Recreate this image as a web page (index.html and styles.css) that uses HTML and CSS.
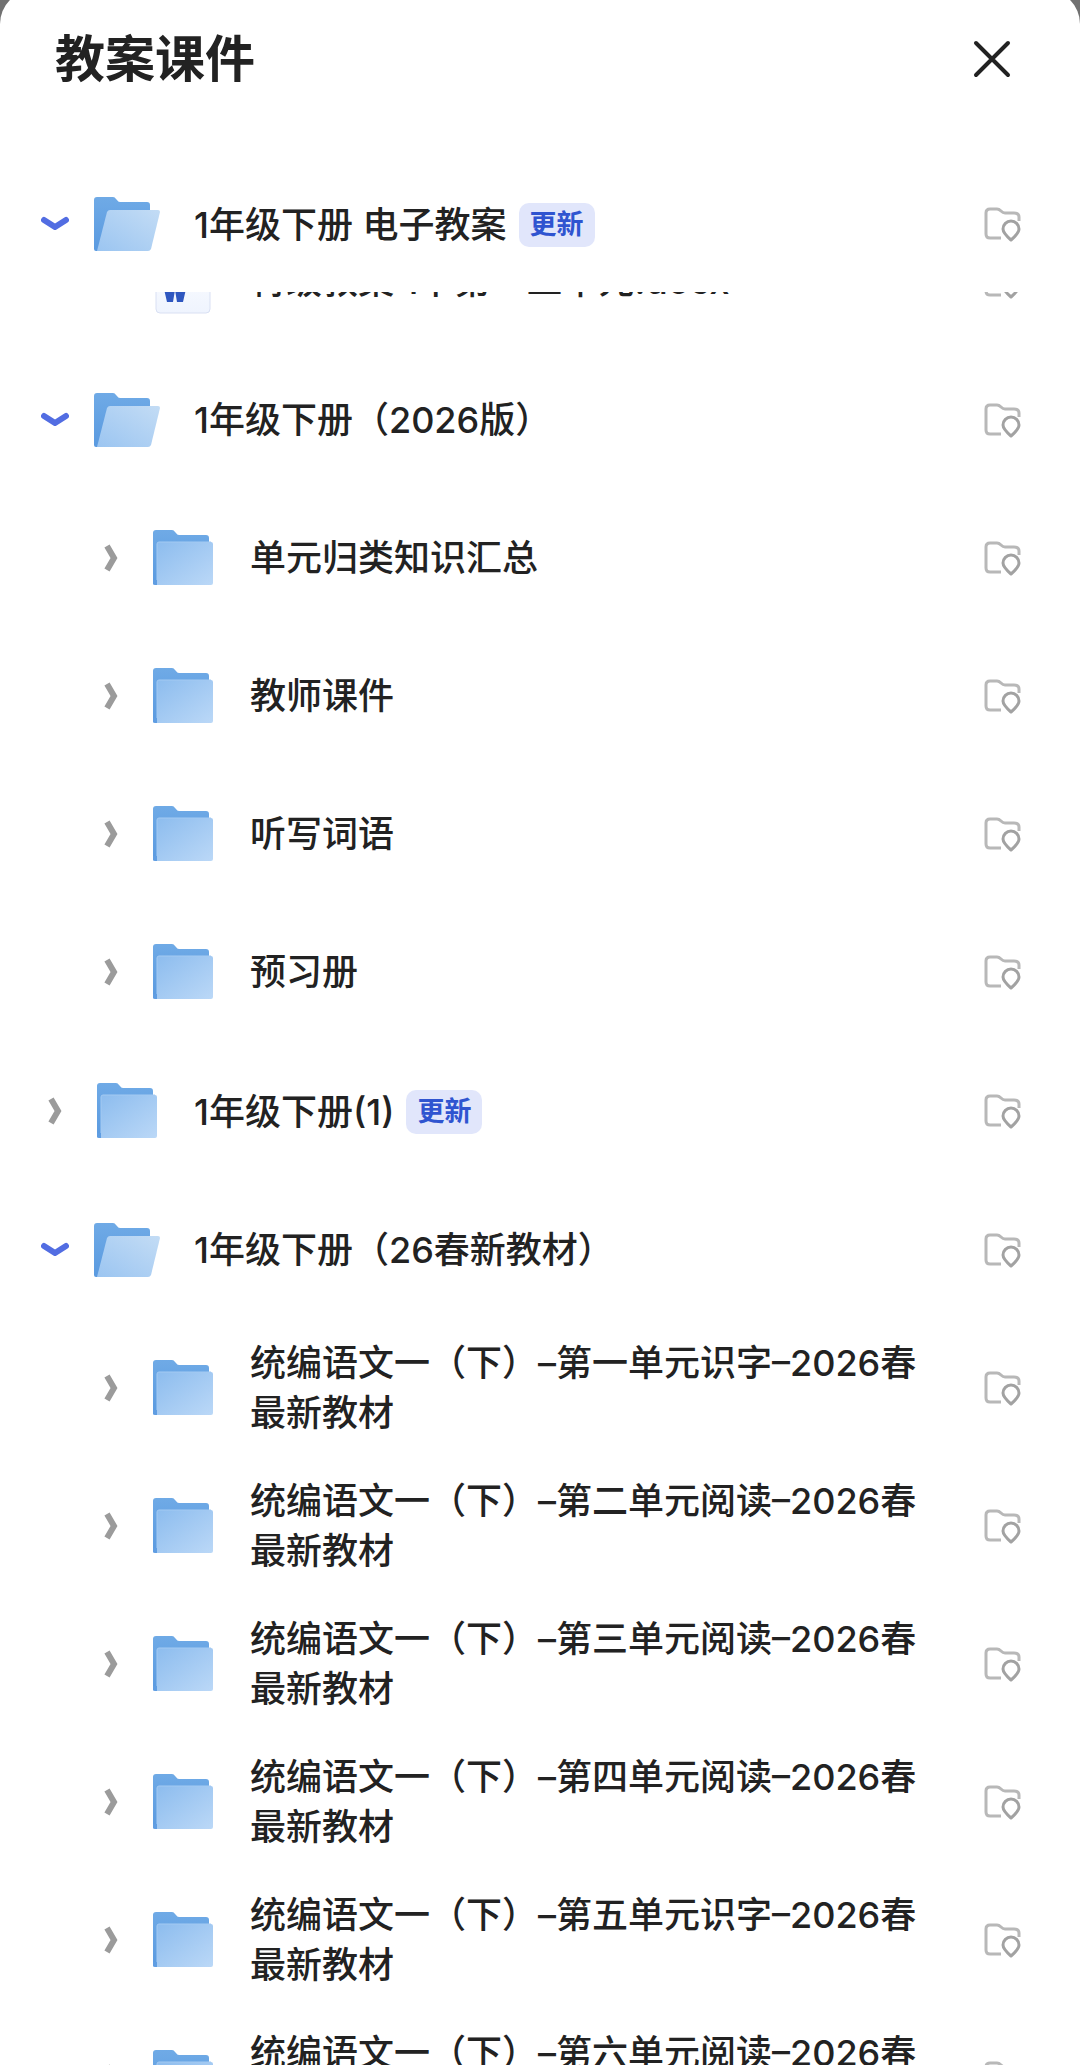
FILE: index.html
```html
<!DOCTYPE html>
<html lang="zh-CN">
<head>
    <meta charset="UTF-8">
    <meta name="viewport" content="width=device-width, initial-scale=1.0">
    <title>教案课件</title>
    <link rel="stylesheet" href="styles.css">
</head>
<body>
    <!-- Icon definitions -->
    <svg class="icon-defs" aria-hidden="true" xmlns="http://www.w3.org/2000/svg">
        <defs>
            <linearGradient id="back" x1="0" y1="0" x2="0" y2="1">
                <stop offset="0" stop-color="#6faae6"/>
                <stop offset="1" stop-color="#5a9ae0"/>
            </linearGradient>
            <linearGradient id="front" x1="0" y1="0" x2="1" y2="1">
                <stop offset="0" stop-color="#8cbcee"/>
                <stop offset="1" stop-color="#bbd8f7"/>
            </linearGradient>
            <linearGradient id="flap" x1="0" y1="1" x2="1" y2="0">
                <stop offset="0" stop-color="#9bc5f1"/>
                <stop offset="1" stop-color="#c3dcf5"/>
            </linearGradient>
            <linearGradient id="paper" x1="0" y1="0" x2="0" y2="1">
                <stop offset="0" stop-color="#ffffff"/>
                <stop offset="1" stop-color="#eff4fe"/>
            </linearGradient>
        </defs>
        <symbol id="folder" viewBox="0 0 66 56">
            <path d="M3 54V3q0-3 3-3h16q2 0 3 2l1 1q1 2 3 2h27q3 0 3 3v45z" fill="url(#back)"/>
            <path d="M7 14q0-2 2-2h52q2 0 2 2v39q0 2-2 2H5q2 0 2-2z" fill="url(#front)"/>
            <path d="M7 53V14q0-2 2-2h52" fill="none" stroke="#a4caf2"/>
            <path d="M3 54V50h4v5H5q-2 0-2-1z" fill="#5f9de2"/>
        </symbol>
        <symbol id="folder-open" viewBox="0 0 66 56">
            <path d="M0 53V4q0-3 3-3h16q2 0 3 2l1 1q1 2 3 2h27q3 0 3 3v20L5 55H2q-2 0-2-2z" fill="url(#back)"/>
            <path d="M13 16q1-2 3-2h48q2 0 2 2l-9 37q-1 2-3 2H3z" fill="url(#flap)"/>
        </symbol>
        <symbol id="down" viewBox="0 0 28 28">
            <path d="M3 10l11 7 11-7" fill="none" stroke="#526de2" stroke-width="6" stroke-linecap="round" stroke-linejoin="round"/>
        </symbol>
        <symbol id="right" viewBox="0 0 28 28">
            <path d="M10 2l7 12-7 12" fill="none" stroke="#9b9b9b" stroke-width="6"/>
        </symbol>
        <symbol id="locate" viewBox="0 0 38 36">
            <path d="M18 32H7q-4 0-4-4V7q0-4 4-4h7q2 0 4 2t4 2h9q5 0 5 4v4" fill="none" stroke="#b8b8b8" stroke-width="3"/>
            <path d="M28 34q-8-7-8-11a8 8 0 0 1 16 0q0 4-8 11z" fill="none" stroke="#a2a2a2" stroke-width="3" stroke-linejoin="round"/>
        </symbol>
        <symbol id="close" viewBox="0 0 38 38">
            <path d="M3 3l32 32M35 3L3 35" fill="none" stroke="#222222" stroke-width="4" stroke-linecap="round"/>
        </symbol>
        <symbol id="doc" viewBox="0 0 66 66">
            <rect x="6" y="1" width="54" height="64" rx="4" fill="url(#paper)" stroke="#d9e0f3"/>
            <path d="M11 28h6l4 14 2-14h4l2 14 4-14h6l-6 26h-6l-2-12-2 12h-6z" fill="#2f57c0"/>
        </symbol>
    </svg>

    <main class="sheet">
        <header class="sheet-header">
            <h1>教案课件</h1>
            <button class="icon-button" type="button" aria-label="关闭"><svg class="close"><use href="#close"/></svg></button>
        </header>

        <div class="row pinned">
            <button class="toggle" type="button" aria-expanded="true" aria-label="收起"><svg class="arrow"><use href="#down"/></svg></button>
            <svg class="folder"><use href="#folder-open"/></svg>
            <div class="name tagged">1年级下册 电子教案<span class="badge">更新</span></div>
            <button class="icon-button" type="button" aria-label="定位"><svg class="locate"><use href="#locate"/></svg></button>
        </div>

        <!-- Last file of the first folder, scrolled under the pinned row -->
        <div class="scrolled">
            <div class="row child">
                <span class="toggle"></span>
                <svg class="doc"><use href="#doc"/></svg>
                <div class="name">特级教案 1下第一二单元.docx</div>
                <button class="icon-button" type="button" aria-label="定位"><svg class="locate"><use href="#locate"/></svg></button>
            </div>
        </div>

        <ul class="tree">
            <li>
                <div class="row">
                    <button class="toggle" type="button" aria-expanded="true" aria-label="收起"><svg class="arrow"><use href="#down"/></svg></button>
                    <svg class="folder"><use href="#folder-open"/></svg>
                    <div class="name">1年级下册（2026版）</div>
                    <button class="icon-button" type="button" aria-label="定位"><svg class="locate"><use href="#locate"/></svg></button>
                </div>
                <ul>
                    <li class="row child">
                        <button class="toggle" type="button" aria-expanded="false" aria-label="展开"><svg class="arrow"><use href="#right"/></svg></button>
                        <svg class="folder"><use href="#folder"/></svg>
                        <div class="name">单元归类知识汇总</div>
                        <button class="icon-button" type="button" aria-label="定位"><svg class="locate"><use href="#locate"/></svg></button>
                    </li>
                    <li class="row child">
                        <button class="toggle" type="button" aria-expanded="false" aria-label="展开"><svg class="arrow"><use href="#right"/></svg></button>
                        <svg class="folder"><use href="#folder"/></svg>
                        <div class="name">教师课件</div>
                        <button class="icon-button" type="button" aria-label="定位"><svg class="locate"><use href="#locate"/></svg></button>
                    </li>
                    <li class="row child">
                        <button class="toggle" type="button" aria-expanded="false" aria-label="展开"><svg class="arrow"><use href="#right"/></svg></button>
                        <svg class="folder"><use href="#folder"/></svg>
                        <div class="name">听写词语</div>
                        <button class="icon-button" type="button" aria-label="定位"><svg class="locate"><use href="#locate"/></svg></button>
                    </li>
                    <li class="row child">
                        <button class="toggle" type="button" aria-expanded="false" aria-label="展开"><svg class="arrow"><use href="#right"/></svg></button>
                        <svg class="folder"><use href="#folder"/></svg>
                        <div class="name">预习册</div>
                        <button class="icon-button" type="button" aria-label="定位"><svg class="locate"><use href="#locate"/></svg></button>
                    </li>
                </ul>
            </li>
            <li>
                <div class="row">
                    <button class="toggle" type="button" aria-expanded="false" aria-label="展开"><svg class="arrow"><use href="#right"/></svg></button>
                    <svg class="folder"><use href="#folder"/></svg>
                    <div class="name tagged">1年级下册(1)<span class="badge">更新</span></div>
                    <button class="icon-button" type="button" aria-label="定位"><svg class="locate"><use href="#locate"/></svg></button>
                </div>
            </li>
            <li>
                <div class="row">
                    <button class="toggle" type="button" aria-expanded="true" aria-label="收起"><svg class="arrow"><use href="#down"/></svg></button>
                    <svg class="folder"><use href="#folder-open"/></svg>
                    <div class="name">1年级下册（26春新教材）</div>
                    <button class="icon-button" type="button" aria-label="定位"><svg class="locate"><use href="#locate"/></svg></button>
                </div>
                <ul>
                    <li class="row child">
                        <button class="toggle" type="button" aria-expanded="false" aria-label="展开"><svg class="arrow"><use href="#right"/></svg></button>
                        <svg class="folder"><use href="#folder"/></svg>
                        <div class="name">统编语文一（下）–第一单元识字–2026春最新教材</div>
                        <button class="icon-button" type="button" aria-label="定位"><svg class="locate"><use href="#locate"/></svg></button>
                    </li>
                    <li class="row child">
                        <button class="toggle" type="button" aria-expanded="false" aria-label="展开"><svg class="arrow"><use href="#right"/></svg></button>
                        <svg class="folder"><use href="#folder"/></svg>
                        <div class="name">统编语文一（下）–第二单元阅读–2026春最新教材</div>
                        <button class="icon-button" type="button" aria-label="定位"><svg class="locate"><use href="#locate"/></svg></button>
                    </li>
                    <li class="row child">
                        <button class="toggle" type="button" aria-expanded="false" aria-label="展开"><svg class="arrow"><use href="#right"/></svg></button>
                        <svg class="folder"><use href="#folder"/></svg>
                        <div class="name">统编语文一（下）–第三单元阅读–2026春最新教材</div>
                        <button class="icon-button" type="button" aria-label="定位"><svg class="locate"><use href="#locate"/></svg></button>
                    </li>
                    <li class="row child">
                        <button class="toggle" type="button" aria-expanded="false" aria-label="展开"><svg class="arrow"><use href="#right"/></svg></button>
                        <svg class="folder"><use href="#folder"/></svg>
                        <div class="name">统编语文一（下）–第四单元阅读–2026春最新教材</div>
                        <button class="icon-button" type="button" aria-label="定位"><svg class="locate"><use href="#locate"/></svg></button>
                    </li>
                    <li class="row child">
                        <button class="toggle" type="button" aria-expanded="false" aria-label="展开"><svg class="arrow"><use href="#right"/></svg></button>
                        <svg class="folder"><use href="#folder"/></svg>
                        <div class="name">统编语文一（下）–第五单元识字–2026春最新教材</div>
                        <button class="icon-button" type="button" aria-label="定位"><svg class="locate"><use href="#locate"/></svg></button>
                    </li>
                    <li class="row child">
                        <button class="toggle" type="button" aria-expanded="false" aria-label="展开"><svg class="arrow"><use href="#right"/></svg></button>
                        <svg class="folder"><use href="#folder"/></svg>
                        <div class="name">统编语文一（下）–第六单元阅读–2026春最新教材</div>
                        <button class="icon-button" type="button" aria-label="定位"><svg class="locate"><use href="#locate"/></svg></button>
                    </li>
                </ul>
            </li>
        </ul>
    </main>
</body>
</html>
```
FILE: styles.css
```css
* {
    box-sizing: border-box;
}
body {
    margin: 0;
    height: 100vh;
    overflow: hidden;
    background: #717171;
    color: #222222;
    font-family: Inter, "Noto Sans CJK SC", sans-serif;
}
.icon-defs {
    display: block;
    width: 0;
    height: 0;
}
svg {
    display: block;
    flex: none;
}
ul {
    list-style: none;
    margin: 0;
    padding: 0;
}
button {
    padding: 0;
    border: 0;
    background: none;
    cursor: pointer;
}

.sheet {
    margin-top: -10px;
    background: #ffffff;
    border-radius: 34px 34px 0 0;
}
.sheet-header {
    display: flex;
    align-items: center;
    justify-content: space-between;
    height: 165px;
    padding: 0 69px 27px 55px;
}
h1 {
    margin: 0;
    font-size: 50px;
    line-height: 72px;
    font-weight: 700;
}
.close {
    width: 38px;
    height: 38px;
}

.row {
    display: flex;
    align-items: center;
    min-height: 139px;
    padding: 18px 59px 18px 41px;
}
.row.child {
    min-height: 138px;
    padding-left: 97px;
}
.row.pinned {
    min-height: 137px;
}
.scrolled {
    display: flex;
    align-items: flex-end;
    height: 58px;
    overflow: hidden;
}
.scrolled .row {
    flex: 1;
}

.toggle {
    flex: none;
    width: 28px;
    margin-right: 25px;
}
.arrow {
    width: 28px;
    height: 28px;
}
.folder {
    width: 66px;
    height: 56px;
}
.doc {
    width: 66px;
    height: 66px;
}
.name {
    flex: 1;
    margin: 0 48px 0 34px;
    font-size: 36px;
    line-height: 50px;
    font-weight: 500;
}
.name.tagged {
    display: flex;
    align-items: center;
    padding-top: 3px;
}
.badge {
    margin-left: 12px;
    padding: 0 11px;
    border-radius: 10px;
    background: #e1e6fb;
    color: #2f54d0;
    font-size: 27px;
    line-height: 44px;
    font-weight: 700;
}
.icon-button {
    flex: none;
}
.locate {
    width: 38px;
    height: 36px;
}
```
